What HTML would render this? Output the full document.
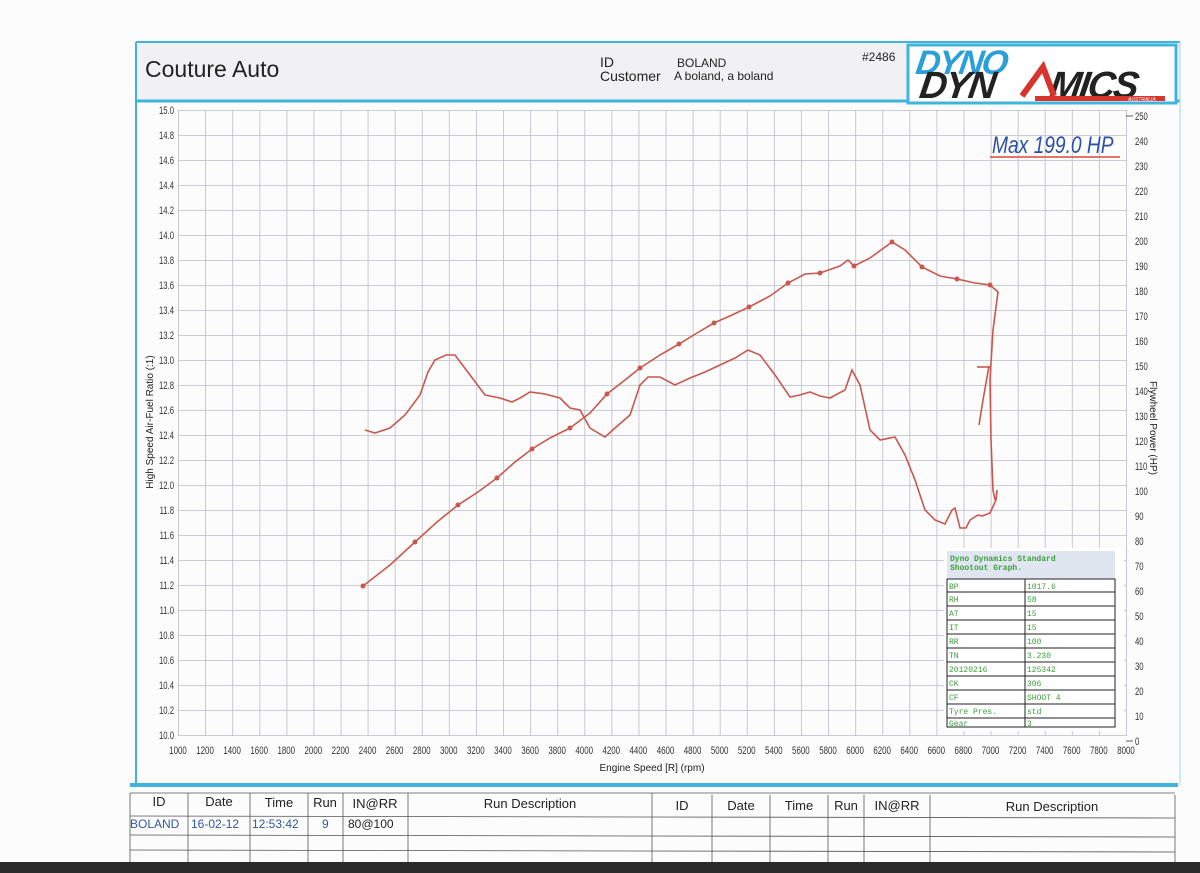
<!DOCTYPE html>
<html><head><meta charset="utf-8"><style>
html,body{margin:0;padding:0;background:#fdfdfd;width:1200px;height:873px;overflow:hidden;font-family:"Liberation Sans",sans-serif}
</style></head><body>
<svg width="1200" height="873" xmlns="http://www.w3.org/2000/svg" font-family="Liberation Sans, sans-serif">
<defs>
<pattern id="vp" x="178" y="0" width="27.0857" height="873" patternUnits="userSpaceOnUse">
<line x1="0.5" y1="0" x2="0.5" y2="873" stroke="#bcbcc8" stroke-width="0.8"/>
</pattern>
<pattern id="hp" x="0" y="110" width="1200" height="25" patternUnits="userSpaceOnUse">
<line x1="0" y1="0.5" x2="1200" y2="0.5" stroke="#bcbcc8" stroke-width="0.8"/>
</pattern>
</defs>
<rect width="1200" height="873" fill="#fcfcfc"/>
<rect x="136" y="42" width="1044" height="60" fill="#f1f1f3"/>
<line x1="136" y1="42" x2="1180" y2="42" stroke="#3fb4dc" stroke-width="2"/>
<line x1="136" y1="101" x2="1180" y2="101" stroke="#3fb4dc" stroke-width="3"/>
<line x1="136" y1="42" x2="136" y2="785" stroke="#3fb4dc" stroke-width="2"/>
<line x1="1180" y1="42" x2="1180" y2="785" stroke="#9fd6ea" stroke-width="1"/>
<text x="145" y="77" font-size="23" fill="#222">Couture Auto</text>
<text x="600" y="67" font-size="14" fill="#222">ID</text>
<text x="677" y="67" font-size="12" fill="#222">BOLAND</text>
<text x="600" y="81" font-size="14" fill="#222">Customer</text>
<text x="674" y="80" font-size="12" fill="#222">A boland, a boland</text>
<text x="862" y="61" font-size="12" fill="#222">#2486</text>
<rect x="908" y="45" width="268" height="58" fill="#fff" stroke="#3fb4dc" stroke-width="3"/>
<g font-weight="bold" font-style="italic">
<text x="916" y="74" font-size="34" fill="#2a9fd8" transform="skewX(-8) translate(9,0)" letter-spacing="-2">DYNO</text>
<text x="920" y="98" font-size="38" fill="#222" transform="skewX(-8) translate(12,0)" letter-spacing="-2">DYN</text>
<text x="1050" y="98" font-size="38" fill="#222" transform="skewX(-8) translate(12,0)" letter-spacing="-2">MICS</text>
</g>
<path d="M1022 96 L1043 67 L1054 96" fill="none" stroke="#d8342c" stroke-width="6"/>
<rect x="1035" y="96" width="130" height="5" fill="#d8342c"/>
<text x="1128" y="101" font-size="5" fill="#fff" font-style="italic">AUSTRALIA</text>

<rect x="178" y="110" width="949" height="626" fill="url(#hp)"/>
<rect x="178" y="110" width="949" height="626" fill="url(#vp)"/>

<g font-size="11" fill="#333" text-anchor="end" transform="translate(174,0) scale(0.7,1) translate(-174,0)">
<text x="174" y="114">15.0</text><text x="174" y="139">14.8</text><text x="174" y="164">14.6</text><text x="174" y="189">14.4</text><text x="174" y="214">14.2</text><text x="174" y="239">14.0</text><text x="174" y="264">13.8</text><text x="174" y="289">13.6</text><text x="174" y="314">13.4</text><text x="174" y="339">13.2</text><text x="174" y="364">13.0</text><text x="174" y="389">12.8</text><text x="174" y="414">12.6</text><text x="174" y="439">12.4</text><text x="174" y="464">12.2</text><text x="174" y="489">12.0</text><text x="174" y="514">11.8</text><text x="174" y="539">11.6</text><text x="174" y="564">11.4</text><text x="174" y="589">11.2</text><text x="174" y="614">11.0</text><text x="174" y="639">10.8</text><text x="174" y="664">10.6</text><text x="174" y="689">10.4</text><text x="174" y="714">10.2</text><text x="174" y="739">10.0</text>
</g>
<g font-size="11" fill="#333" transform="translate(1135,0) scale(0.7,1) translate(-1135,0)">
<text x="1135" y="120">250</text><text x="1135" y="145">240</text><text x="1135" y="170">230</text><text x="1135" y="195">220</text><text x="1135" y="220">210</text><text x="1135" y="245">200</text><text x="1135" y="270">190</text><text x="1135" y="295">180</text><text x="1135" y="320">170</text><text x="1135" y="345">160</text><text x="1135" y="370">150</text><text x="1135" y="395">140</text><text x="1135" y="420">130</text><text x="1135" y="445">120</text><text x="1135" y="470">110</text><text x="1135" y="495">100</text><text x="1135" y="520">90</text><text x="1135" y="545">80</text><text x="1135" y="570">70</text><text x="1135" y="595">60</text><text x="1135" y="620">50</text><text x="1135" y="645">40</text><text x="1135" y="670">30</text><text x="1135" y="695">20</text><text x="1135" y="720">10</text><text x="1135" y="745">0</text>
</g>
<g stroke="#333" stroke-width="0.8">
<line x1="1126" y1="116" x2="1133" y2="116"/><line x1="1126" y1="741" x2="1133" y2="741"/>
</g>
<g font-size="11" fill="#333" text-anchor="middle" transform="scale(0.72,1)">
<text x="247.2" y="754">1000</text><text x="284.8" y="754">1200</text><text x="322.4" y="754">1400</text><text x="360" y="754">1600</text><text x="397.6" y="754">1800</text><text x="435.2" y="754">2000</text><text x="472.9" y="754">2200</text><text x="510.5" y="754">2400</text><text x="548.1" y="754">2600</text><text x="585.7" y="754">2800</text><text x="623.3" y="754">3000</text><text x="660.9" y="754">3200</text><text x="698.6" y="754">3400</text><text x="736.2" y="754">3600</text><text x="773.8" y="754">3800</text><text x="811.4" y="754">4000</text><text x="849" y="754">4200</text><text x="886.6" y="754">4400</text><text x="924.3" y="754">4600</text><text x="961.9" y="754">4800</text><text x="999.5" y="754">5000</text><text x="1037.1" y="754">5200</text><text x="1074.7" y="754">5400</text><text x="1112.3" y="754">5600</text><text x="1150" y="754">5800</text><text x="1187.6" y="754">6000</text><text x="1225.2" y="754">6200</text><text x="1262.8" y="754">6400</text><text x="1300.4" y="754">6600</text><text x="1338" y="754">6800</text><text x="1375.7" y="754">7000</text><text x="1413.3" y="754">7200</text><text x="1450.9" y="754">7400</text><text x="1488.5" y="754">7600</text><text x="1526.1" y="754">7800</text><text x="1563.9" y="754">8000</text>
</g>
<text transform="translate(153,422) rotate(-90)" font-size="10" fill="#222" text-anchor="middle">High Speed Air-Fuel Ratio (:1)</text>
<text transform="translate(1150,428) rotate(90)" font-size="10" fill="#222" text-anchor="middle">Flywheel Power (HP)</text>
<text x="652" y="771" font-size="10" fill="#222" text-anchor="middle">Engine Speed [R] (rpm)</text>
<text x="992" y="153" font-size="24" fill="#2b4fa8" font-style="italic" transform="translate(992,0) scale(0.8,1) translate(-992,0)">Max 199.0 HP</text>
<line x1="990" y1="157" x2="1120" y2="157" stroke="#d84a3a" stroke-width="1.5"/>
<g fill="none" stroke="#c8584e" stroke-width="1.6">
<polyline points="363,586 390,565 415,542 437,522 458,505 478,492 497,478 515,462 532,449 550,438 570,428 590,413 607,394 625,380 640,368 660,355 679,344 697,333 714,323 732,315 749,307 770,296 788,283 805,274 820,273 840,266 848,260 854,266 870,258 892,242 905,250 922,267 940,276 957,279 975,283 990,285 998,292 993,330 990,380 991,440 993,490 995,500"/>
<polyline points="365,430 375,433 390,428 405,415 420,395 428,372 435,360 446,355 455,355 470,375 485,395 500,398 512,402 520,398 530,392 545,394 560,398 570,408 580,410 590,428 605,437 615,428 630,415 640,385 648,377 660,377 675,385 690,378 705,372 720,365 735,358 748,350 760,355 775,375 790,397 800,395 810,392 820,396 830,398 845,390 852,370 860,385 870,430 880,440 895,437 905,455 915,480 925,510 935,520 945,524 952,510 955,508 960,528 966,528 970,520 978,515 982,516 990,513 996,500 997,490"/>
<polyline points="979,425 983,400 989,366"/>
<polyline points="977,367 991,367"/>
</g>
<g fill="#c8584e">
<circle cx="363" cy="586" r="2.5"/><circle cx="415" cy="542" r="2.5"/><circle cx="458" cy="505" r="2.5"/><circle cx="497" cy="478" r="2.5"/><circle cx="532" cy="449" r="2.5"/><circle cx="570" cy="428" r="2.5"/><circle cx="607" cy="394" r="2.5"/><circle cx="640" cy="368" r="2.5"/><circle cx="679" cy="344" r="2.5"/><circle cx="714" cy="323" r="2.5"/><circle cx="749" cy="307" r="2.5"/><circle cx="788" cy="283" r="2.5"/><circle cx="820" cy="273" r="2.5"/><circle cx="854" cy="266" r="2.5"/><circle cx="892" cy="242" r="2.5"/><circle cx="922" cy="267" r="2.5"/><circle cx="957" cy="279" r="2.5"/><circle cx="990" cy="285" r="2.5"/>
</g>
<rect x="944" y="548" width="180" height="183" fill="#fff"/>
<rect x="947" y="551" width="168" height="28" fill="#dfe6f0"/>
<text x="950" y="561" font-size="8" fill="#3aa03a" font-family="Liberation Mono, monospace" font-weight="bold">Dyno Dynamics Standard</text>
<text x="950" y="570" font-size="8" fill="#3aa03a" font-family="Liberation Mono, monospace" font-weight="bold">Shootout Graph.</text>
<g stroke="#222" stroke-width="1" fill="none">
<rect x="947" y="579" width="168" height="148"/>
<line x1="1025" y1="579" x2="1025" y2="727"/>
<line x1="947" y1="592" x2="1115" y2="592"/><line x1="947" y1="606" x2="1115" y2="606"/><line x1="947" y1="620" x2="1115" y2="620"/><line x1="947" y1="634" x2="1115" y2="634"/><line x1="947" y1="648" x2="1115" y2="648"/><line x1="947" y1="662" x2="1115" y2="662"/><line x1="947" y1="676" x2="1115" y2="676"/><line x1="947" y1="690" x2="1115" y2="690"/><line x1="947" y1="704" x2="1115" y2="704"/><line x1="947" y1="718" x2="1115" y2="718"/>
</g>
<g font-size="8" fill="#3aa03a" font-family="Liberation Mono, monospace">
<text x="949" y="589">BP</text><text x="1027" y="589">1017.6</text>
<text x="949" y="602">RH</text><text x="1027" y="602">58</text>
<text x="949" y="616">AT</text><text x="1027" y="616">15</text>
<text x="949" y="630">IT</text><text x="1027" y="630">15</text>
<text x="949" y="644">RR</text><text x="1027" y="644">100</text>
<text x="949" y="658">TN</text><text x="1027" y="658">3.230</text>
<text x="949" y="672">20120216</text><text x="1027" y="672">125342</text>
<text x="949" y="686">CK</text><text x="1027" y="686">306</text>
<text x="949" y="700">CF</text><text x="1027" y="700">SHOOT 4</text>
<text x="949" y="714">Tyre Pres.</text><text x="1027" y="714">std</text>
<text x="949" y="726">Gear</text><text x="1027" y="726">3</text>
</g>
<line x1="130" y1="785" x2="1178" y2="785" stroke="#3fb4dc" stroke-width="4"/>
<g stroke="#555" stroke-width="0.8" fill="none">
<line x1="130" y1="793" x2="1175" y2="793"/><line x1="130" y1="816" x2="1175" y2="818"/><line x1="130" y1="835" x2="1175" y2="837"/><line x1="130" y1="850" x2="1175" y2="852"/>
<line x1="130" y1="793" x2="130" y2="862"/><line x1="188" y1="793" x2="188" y2="862"/><line x1="250" y1="793" x2="250" y2="862"/><line x1="308" y1="793" x2="308" y2="862"/><line x1="343" y1="793" x2="343" y2="862"/><line x1="408" y1="793" x2="408" y2="862"/><line x1="652" y1="793" x2="652" y2="862"/><line x1="712" y1="795" x2="712" y2="862"/><line x1="770" y1="795" x2="770" y2="862"/><line x1="828" y1="795" x2="828" y2="862"/><line x1="864" y1="795" x2="864" y2="862"/><line x1="930" y1="795" x2="930" y2="862"/><line x1="1175" y1="795" x2="1175" y2="862"/>
</g>
<g font-size="13" fill="#222" text-anchor="middle">
<text x="159" y="806">ID</text><text x="219" y="806">Date</text><text x="279" y="807">Time</text><text x="325" y="807">Run</text><text x="375" y="808">IN@RR</text><text x="530" y="808">Run Description</text>
<text x="682" y="810">ID</text><text x="741" y="810">Date</text><text x="799" y="810">Time</text><text x="846" y="810">Run</text><text x="897" y="810">IN@RR</text><text x="1052" y="811">Run Description</text>
</g>
<g font-size="12" fill="#2e5aa0">
<text x="130" y="828">BOLAND</text><text x="191" y="828">16-02-12</text><text x="252" y="828">12:53:42</text><text x="322" y="828">9</text><text x="348" y="828" fill="#222">80@100</text>
</g>
<rect x="0" y="862" width="1200" height="11" fill="#2a2a2a"/>
</svg>
</body></html>
